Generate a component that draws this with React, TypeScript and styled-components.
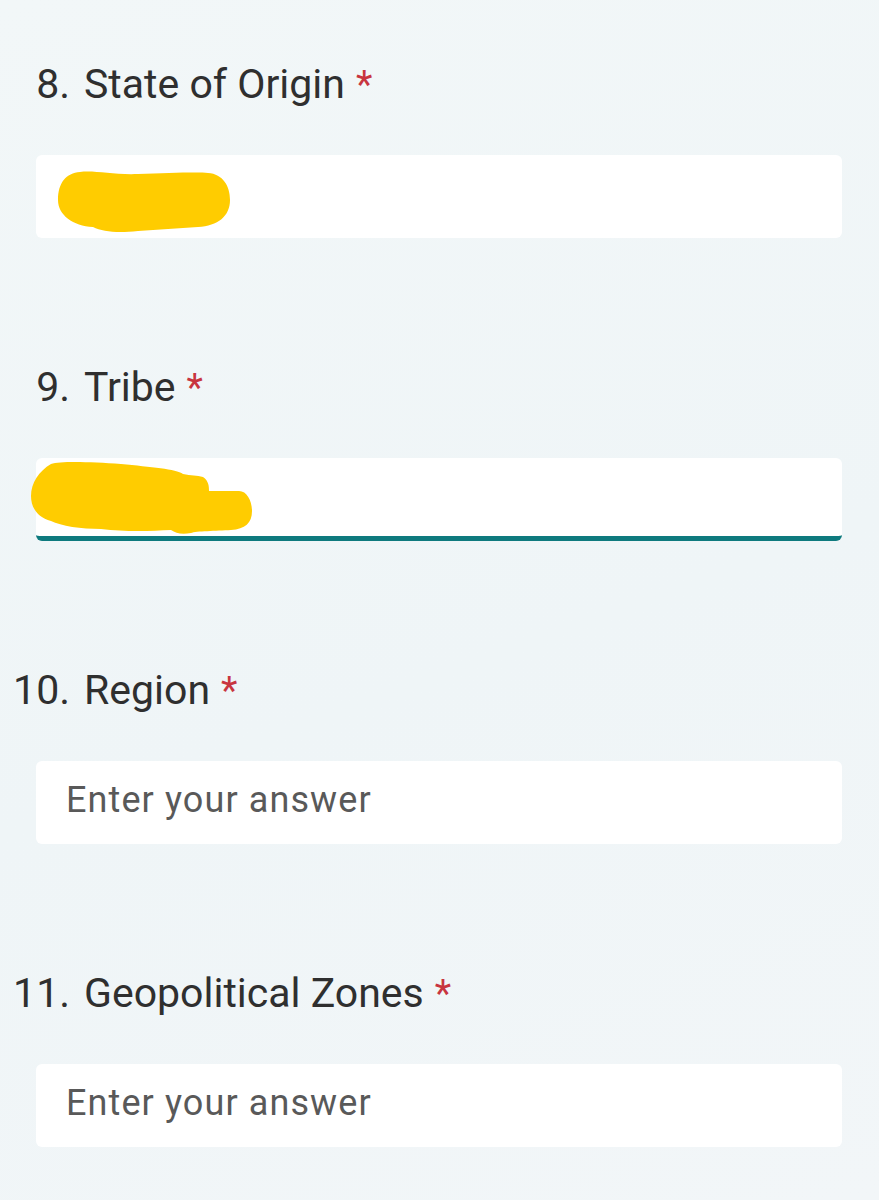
import React from "react";
import styled, { createGlobalStyle } from "styled-components";

const GlobalStyle = createGlobalStyle`
  html, body {
    margin: 0;
    padding: 0;
    background: #f1f6f7;
  }
  body {
    font-family: Roboto, "Noto Sans", "Liberation Sans", sans-serif;
  }
`;

const Page = styled.main`
  min-height: 1200px;
  box-sizing: border-box;
  padding: 60px 0 0 0;
  background: linear-gradient(160deg, #f2f7f8 0%, #eff5f7 55%, #f2f6f8 100%);
  display: flex;
  flex-direction: column;
  gap: 125px;
`;

const Question = styled.section`
  display: flex;
  flex-direction: column;
  gap: 47px;
`;

const Label = styled.div`
  display: flex;
  align-items: baseline;
  height: 48px;
  font-size: 41px;
  line-height: 48px;
  color: #2f2f2f;
`;

const Number = styled.span`
  width: 70px;
  flex: none;
  text-align: right;
  margin-right: 14px;
`;

const Required = styled.span`
  color: #c8353f;
  margin-left: 11px;
  font-size: 38px;
  line-height: 1;
`;

const Field = styled.div<{ $focused?: boolean }>`
  position: relative;
  margin: 0 37px 0 36px;
  height: 83px;
  box-sizing: border-box;
  background: #ffffff;
  border-radius: 6px;
  border-bottom: ${({ $focused }) => ($focused ? "5px solid #0e7a7e" : "none")};
  display: flex;
  align-items: center;
`;

const AnswerInput = styled.input`
  width: 100%;
  height: 100%;
  box-sizing: border-box;
  border: none;
  outline: none;
  background: transparent;
  padding: 0 0 6px 30px;
  font-family: Roboto, "Noto Sans", "Liberation Sans", sans-serif;
  font-size: 36px;
  letter-spacing: 1.1px;
  color: #2f2f2f;

  &::placeholder {
    color: #595959;
    opacity: 1;
  }
`;

const Scribble = styled.svg<{ $left: number; $top: number }>`
  position: absolute;
  left: ${({ $left }) => $left}px;
  top: ${({ $top }) => $top}px;
  overflow: visible;
`;

const YELLOW = "#ffcc00";

function ScribbleOne() {
  return (
    <Scribble $left={22} $top={16} width="173" height="62" viewBox="0 0 173 62">
      <path
        fill={YELLOW}
        d="M 22 1 C 36 -1, 55 4, 80 3 C 110 2, 140 1, 150 2 C 165 3, 172 15, 172 29 C 172 45, 160 55, 140 56 C 120 57, 100 59, 80 60 C 60 62, 45 61, 35 56 C 15 55, 0 44, 0 29 C 0 12, 8 2, 22 1 Z"
      />
    </Scribble>
  );
}

function ScribbleTwo() {
  return (
    <Scribble $left={-5} $top={3} width="221" height="74" viewBox="0 0 221 74">
      <path
        fill={YELLOW}
        d="M 20 3 C 30 0, 60 1, 90 3 C 120 6, 145 8, 152 13 C 160 15, 166 14, 172 16 C 178 20, 178 26, 178 30 L 208 30 C 216 30, 221 40, 221 50 C 221 62, 214 68, 200 69 C 185 70, 165 70, 160 72 C 150 74, 145 72, 140 69 C 120 70, 95 71, 70 68 C 50 68, 30 65, 20 60 C 5 56, 0 45, 0 35 C 0 22, 8 10, 20 3 Z"
      />
    </Scribble>
  );
}

type Item = {
  n: number;
  title: string;
  focused?: boolean;
  redacted?: "one" | "two";
};

const items: Item[] = [
  { n: 8, title: "State of Origin", redacted: "one" },
  { n: 9, title: "Tribe", focused: true, redacted: "two" },
  { n: 10, title: "Region" },
  { n: 11, title: "Geopolitical Zones" },
];

export default function App() {
  return (
    <>
      <GlobalStyle />
      <Page>
        {items.map((q) => (
          <Question key={q.n}>
            <Label>
              <Number>{q.n}.</Number>
              {q.title}
              <Required>*</Required>
            </Label>
            <Field $focused={q.focused}>
              {q.redacted ? (
                <AnswerInput aria-label={q.title} readOnly />
              ) : (
                <AnswerInput placeholder="Enter your answer" aria-label={q.title} />
              )}
              {q.redacted === "one" && <ScribbleOne />}
              {q.redacted === "two" && <ScribbleTwo />}
            </Field>
          </Question>
        ))}
      </Page>
    </>
  );
}
